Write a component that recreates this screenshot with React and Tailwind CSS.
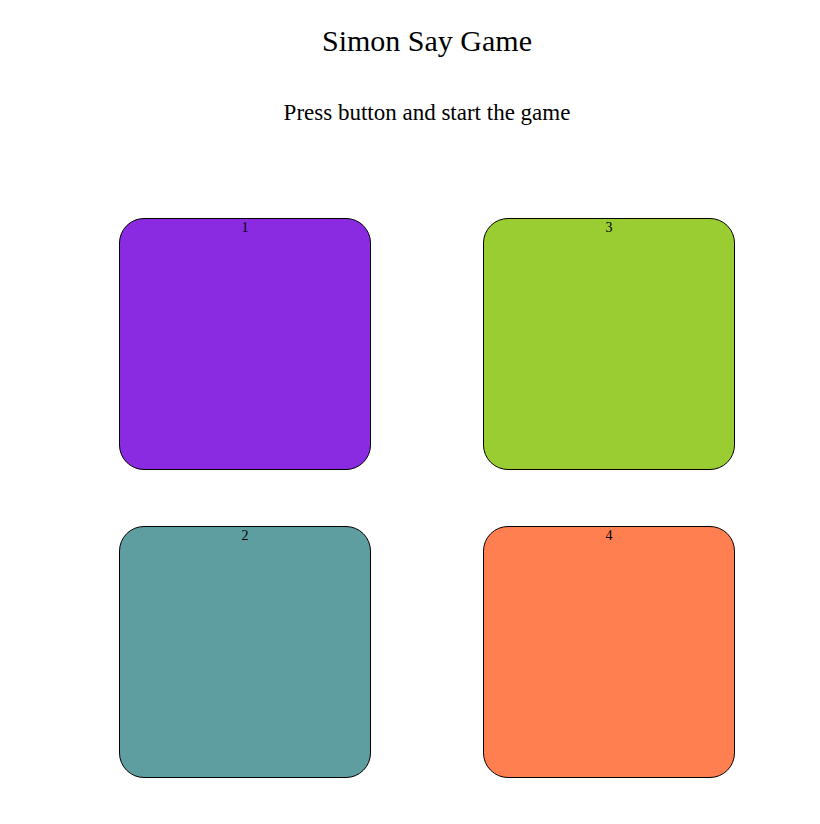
import React from 'react';

function Pad({ n, color }) {
    return (
        <div className={`h-[252px] w-[252px] rounded-[25px] border border-black text-center text-[14px] leading-[18px] ${color}`}>
            {n}
        </div>
    );
}

export default function App() {
    return (
        <div className="min-h-screen bg-white text-black pl-[34px] text-center" style={{ fontFamily: '"Liberation Serif", "Times New Roman", serif' }}>
            <h1 className="pt-[23px] text-[30px] leading-[35px]">Simon Say Game</h1>
            <h2 className="mt-[42px] text-[23px] leading-[26px]">Press button and start the game</h2>

            <div className="mt-[92px] flex justify-center gap-[112px]">
                <div className="flex flex-col gap-[56px]">
                    <Pad n="1" color="bg-[#8a2be2]" />
                    <Pad n="2" color="bg-[#5f9ea0]" />
                </div>
                <div className="flex flex-col gap-[56px]">
                    <Pad n="3" color="bg-[#9acd32]" />
                    <Pad n="4" color="bg-[#ff7f50]" />
                </div>
            </div>
        </div>
    );
}
